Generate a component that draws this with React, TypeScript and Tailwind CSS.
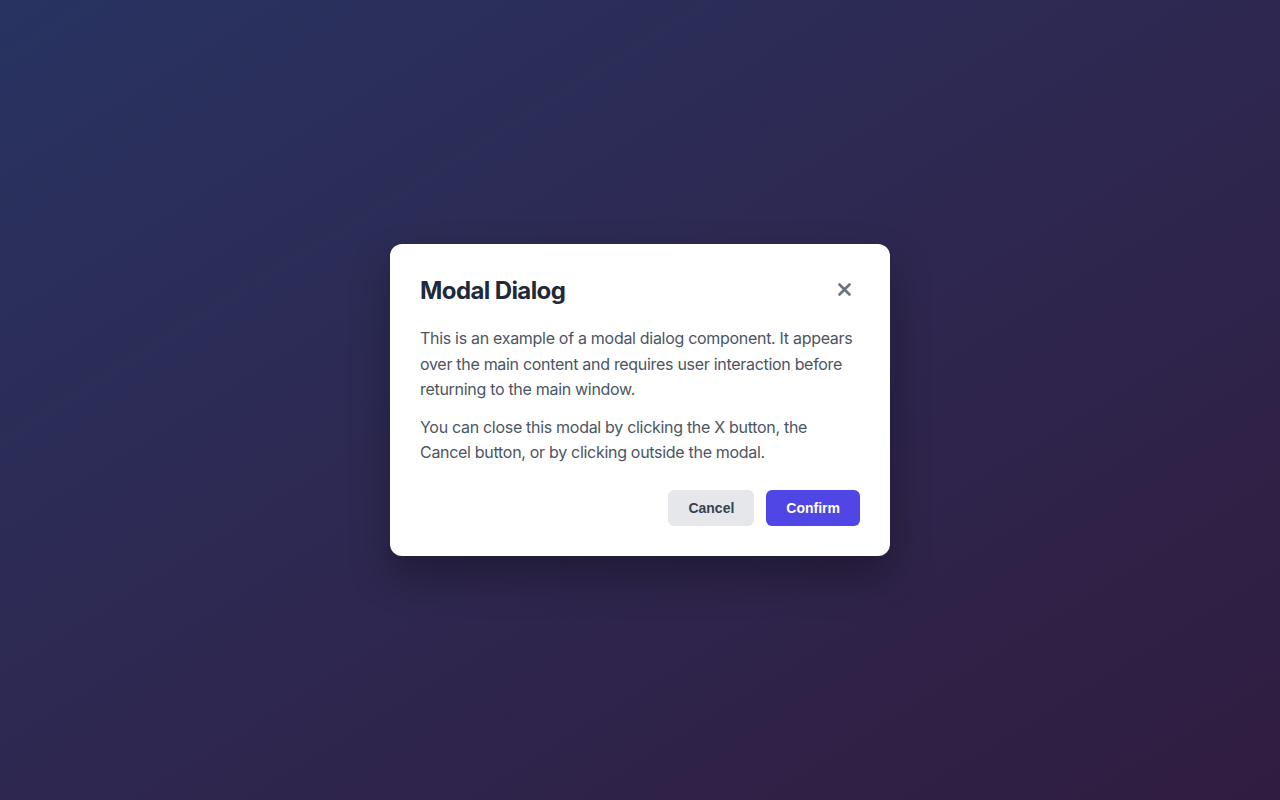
export default function App() {
  return (
    <div className="flex h-[800px] w-full items-center justify-center bg-gradient-to-br from-[#283361] to-[#301c40] font-['Inter',sans-serif]">
      <div className="w-[500px] rounded-xl bg-white p-[30px] pt-[31px] shadow-[0_20px_40px_rgba(0,0,0,0.3)]">
        {/* Header */}
        <div className="mb-[19px] flex items-center justify-between">
          <h2 className="text-2xl leading-8 font-bold tracking-[-0.6px] text-[#1f2937]">Modal Dialog</h2>
          <button className="-mt-[6px] -mb-[2px] flex h-8 w-8 items-center justify-center text-[#6b7280]" aria-label="Close">
            <svg width="13" height="13" viewBox="0 0 13 13" fill="none" stroke="currentColor" strokeWidth={2.6} strokeLinecap="round">
              <path d="M1.5 1.5l10 10M11.5 1.5l-10 10" />
            </svg>
          </button>
        </div>

        {/* Body */}
        <p className="mb-3 text-base leading-[1.6] tracking-[-0.3px] text-[#4b5563]">
          This is an example of a modal dialog component. It appears over the main content and requires user interaction before returning to the main window.
        </p>
        <p className="text-base leading-[1.6] tracking-[-0.3px] text-[#4b5563]">
          You can close this modal by clicking the X button, the Cancel button, or by clicking outside the modal.
        </p>

        {/* Footer */}
        <div className="mt-6 flex justify-end gap-3 font-['Liberation_Sans',Arial,sans-serif]">
          <button className="h-9 rounded-md bg-[#e5e7eb] px-5 text-sm font-bold text-[#374151]">Cancel</button>
          <button className="h-9 rounded-md bg-[#4f46e5] px-5 text-sm font-bold text-white">Confirm</button>
        </div>
      </div>
    </div>
  );
}
